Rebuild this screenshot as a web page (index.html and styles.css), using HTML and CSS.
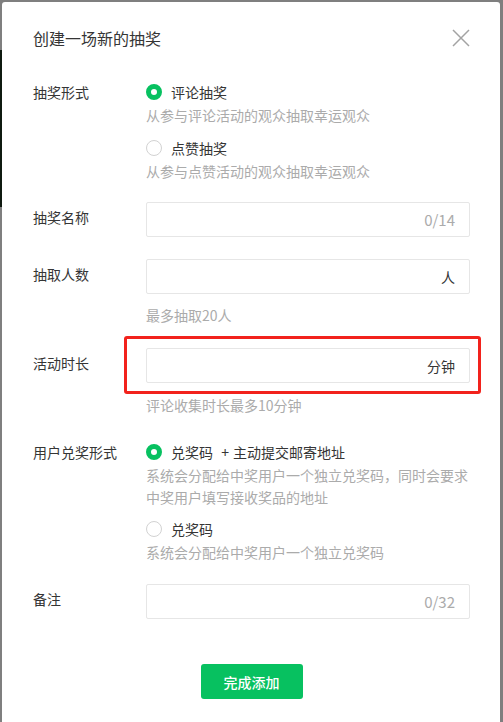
FILE: index.html
```html
<!DOCTYPE html>
<html lang="zh-CN">
<head>
<meta charset="utf-8">
<title>创建一场新的抽奖</title>
<link rel="stylesheet" href="styles.css">
</head>
<body>
<div class="backdrop-strip"></div>
<div class="modal">
  <div class="modal-header">
    <div class="modal-title">创建一场新的抽奖</div>
    <svg class="close" width="18" height="18" viewBox="0 0 18 18"><path d="M1 1L17 17M17 1L1 17" stroke="#a3a3a3" stroke-width="1.5" fill="none"/></svg>
  </div>
  <div class="form">
    <div class="row row-radio">
      <div class="label">抽奖形式</div>
      <div class="control">
        <div class="option"><span class="radio checked"></span><span class="option-text">评论抽奖</span></div>
        <div class="desc">从参与评论活动的观众抽取幸运观众</div>
        <div class="option option-next"><span class="radio"></span><span class="option-text">点赞抽奖</span></div>
        <div class="desc">从参与点赞活动的观众抽取幸运观众</div>
      </div>
    </div>
    <div class="row row-input gap-20">
      <div class="label">抽奖名称</div>
      <div class="control">
        <div class="field"><input class="field-input" type="text"><span class="suffix muted">0/14</span></div>
      </div>
    </div>
    <div class="row row-input gap-22">
      <div class="label">抽取人数</div>
      <div class="control">
        <div class="field"><input class="field-input" type="text"><span class="suffix">人</span></div>
        <div class="hint">最多抽取20人</div>
      </div>
    </div>
    <div class="row row-input gap-22">
      <div class="label">活动时长</div>
      <div class="control">
        <div class="field-wrap">
          <div class="field"><input class="field-input" type="text"><span class="suffix">分钟</span></div>
          <span class="highlight"></span>
        </div>
        <div class="hint hint-11">评论收集时长最多10分钟</div>
      </div>
    </div>
    <div class="row row-radio gap-25">
      <div class="label">用户兑奖形式</div>
      <div class="control">
        <div class="option"><span class="radio checked"></span><span class="option-text">兑奖码 <span class="plus">+</span> 主动提交邮寄地址</span></div>
        <div class="desc">系统会分配给中奖用户一个独立兑奖码，同时会要求中奖用户填写接收奖品的地址</div>
        <div class="option option-next2"><span class="radio"></span><span class="option-text">兑奖码</span></div>
        <div class="desc">系统会分配给中奖用户一个独立兑奖码</div>
      </div>
    </div>
    <div class="row row-input gap-21">
      <div class="label">备注</div>
      <div class="control">
        <div class="field"><input class="field-input" type="text"><span class="suffix muted">0/32</span></div>
      </div>
    </div>
    <div class="actions">
      <button class="btn-primary" type="button">完成添加</button>
    </div>
  </div>
</div>
</body>
</html>
```

FILE: styles.css
```css
html, body {
  margin: 0;
  padding: 0;
}
body {
  width: 503px;
  height: 722px;
  overflow: hidden;
  background: #7f7f7f;
  font-family: "Noto Sans CJK SC", "Microsoft YaHei", sans-serif;
  font-size: 14px;
  color: #353535;
  position: relative;
}
.backdrop-strip {
  position: absolute;
  left: 0;
  top: 50px;
  width: 2px;
  height: 157px;
  background: #0f1a10;
}
.modal {
  position: relative;
  margin: 2px 3px 0 2px;
  height: 720px;
  box-sizing: border-box;
  background: #ffffff;
  border-radius: 3px 3px 0 0;
  padding: 24px 30px 0 31px;
}
.modal-header {
  display: flex;
  align-items: center;
  justify-content: space-between;
  height: 24px;
}
.modal-title {
  font-size: 16px;
  line-height: 24px;
  color: #353535;
}
.close {
  display: block;
  margin-top: -1px;
}
.form {
  margin-top: 31px;
}
.row {
  display: grid;
  grid-template-columns: 113px 1fr;
}
.label {
  line-height: 22px;
  color: #353535;
}
.row-input .label {
  padding-top: 4px;
}
.gap-20 { margin-top: 20px; }
.gap-21 { margin-top: 21px; }
.gap-22 { margin-top: 22px; }
.gap-25 { margin-top: 25px; }
.option {
  display: flex;
  align-items: center;
  height: 22px;
}
.option-next { margin-top: 11px; }
.option-next2 { margin-top: 10px; }
.radio {
  width: 16px;
  height: 16px;
  box-sizing: border-box;
  border-radius: 50%;
  border: 1px solid #d2d2d2;
  background: #fff;
  flex: none;
  margin-right: 9px;
}
.radio.checked {
  border: 5px solid #07c160;
}
.option-text {
  line-height: 22px;
  color: #353535;
}
.plus {
  display: inline-block;
  margin: 0 1px 0 5px;
}
.desc {
  margin-top: 1px;
  line-height: 22px;
  color: #ababab;
}
.hint {
  margin-top: 10px;
  line-height: 22px;
  color: #ababab;
}
.hint-11 { margin-top: 11px; }
.field-wrap {
  position: relative;
}
.field {
  display: flex;
  align-items: center;
  height: 35px;
  box-sizing: border-box;
  border: 1px solid #e6e6e6;
  border-radius: 2px;
  padding: 0 14px 0 10px;
  background: #fff;
}
.field-input {
  flex: 1;
  min-width: 0;
  border: 0;
  outline: none;
  padding: 0;
  background: transparent;
  font: inherit;
  color: #353535;
}
.suffix {
  flex: none;
  font-size: 14px;
  color: #353535;
}
.suffix.muted {
  color: #ababab;
  font-size: 15px;
}
.highlight {
  position: absolute;
  left: -22px;
  top: -12px;
  right: -11px;
  bottom: -11px;
  border: 3px solid #f2221c;
  border-radius: 3px;
  pointer-events: none;
}
.actions {
  display: flex;
  justify-content: center;
  margin-top: 45px;
}
.btn-primary {
  width: 102px;
  height: 35px;
  border: 0;
  border-radius: 3px;
  background: #07c160;
  color: #ffffff;
  font-family: inherit;
  font-size: 14px;
  font-weight: 500;
  padding: 0;
  cursor: pointer;
}
```
